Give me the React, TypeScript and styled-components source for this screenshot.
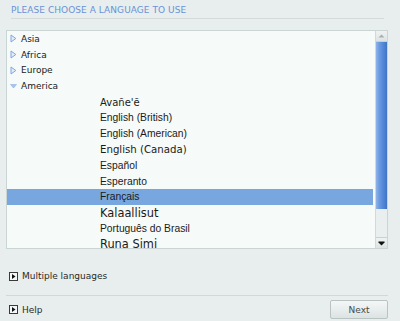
import styled, { createGlobalStyle } from "styled-components";

const Global = createGlobalStyle`
    html, body {
        margin: 0;
        padding: 0;
        background: #e7eeed;
    }
    body {
        font-family: "DejaVu Sans", sans-serif;
    }
`

const Page = styled.div`
    width: 400px;
    height: 321px;
    display: flex;
    flex-direction: column;
    background: #e7eeed;
    overflow: hidden;
`

const Title = styled.div`
    margin: 0 16px 0 11px;
    height: 19px;
    padding-top: 2px;
    box-sizing: border-box;
    border-bottom: 1px solid #d2dbda;
    color: #6a91d8;
    font-size: 9px;
    line-height: 17px;
    letter-spacing: 0.05px;
`

const ListBox = styled.div`
    margin: 11px 0 0 6px;
    width: 382px;
    height: 219px;
    box-sizing: border-box;
    border: 1px solid #cad4d3;
    background: #f6faf8;
    display: flex;
`

const Rows = styled.div`
    flex: 1;
    overflow: hidden;
    padding-right: 2px;
`

const Row = styled.div<{ $selected?: boolean }>`
    height: 15.8px;
    display: flex;
    align-items: center;
    background: ${p => (p.$selected ? "#78a7df" : "transparent")};
    color: #1a1a1a;
    white-space: nowrap;
`

const Group = styled.span`
    font-family: "DejaVu Sans", sans-serif;
    font-size: 9px;
    padding-left: 3px;
    display: flex;
    align-items: center;
    gap: 4px;
`

const Lang = styled.span<{ $font?: string; $size?: number }>`
    padding-left: 93px;
    font-family: ${p => p.$font || "'Liberation Sans', sans-serif"};
    font-size: ${p => p.$size || 10.3}px;
`

const Scrollbar = styled.div`
    width: 11px;
    display: flex;
    flex-direction: column;
    border-left: 1px solid #d2dad9;
    background: #e8eeed;
`

const ScrollButton = styled.div`
    height: 10px;
    display: flex;
    align-items: center;
    justify-content: center;
    background: linear-gradient(#eef2f2, #dde3e3);
    border-bottom: 1px solid #c9d1d0;
    &:last-child {
        border-bottom: none;
        border-top: 1px solid #c9d1d0;
    }
`

const Thumb = styled.div`
    height: 167px;
    background: linear-gradient(90deg, #8fb3e8 0%, #6a9ae0 30%, #4f85d6 70%, #3f74c4 100%);
`

const Track = styled.div`
    flex: 1;
    background: #e9efee;
`

const Expander = styled.div`
    margin: 20px 0 0 9px;
    height: 14px;
    display: flex;
    align-items: center;
    gap: 4px;
    font-size: 9px;
    color: #2a2a2a;
`

const Footer = styled.div`
    margin: 12px 12px 0 6px;
    border-top: 1px solid #d0d9d8;
    padding: 4px 0 0 3px;
    display: flex;
    align-items: center;
    justify-content: space-between;
`

const HelpLink = styled.div`
    display: flex;
    align-items: center;
    gap: 4px;
    font-size: 9px;
    color: #2a2a2a;
`

const NextButton = styled.button`
    width: 58px;
    height: 19px;
    padding: 0;
    border: 1px solid #b9c3c2;
    border-radius: 2px;
    background: linear-gradient(#f4f7f7, #dce3e3);
    font-family: "DejaVu Sans", sans-serif;
    font-size: 9px;
    color: #4a4a4a;
`

function Triangle({ open }: { open?: boolean }) {
    if (open) {
        return (
            <svg width="7" height="7" viewBox="0 0 7 7">
                <path d="M0.5 1.5 L6.5 1.5 L3.5 5 Z" fill="#a8c3ea" stroke="#8fb1e4" strokeWidth="0.6" />
            </svg>
        )
    }
    return (
        <svg width="7" height="9" viewBox="0 0 7 9">
            <path d="M1 1 L5.8 4.5 L1 8 Z" fill="#e3edfa" stroke="#7fa6e2" strokeWidth="1" />
        </svg>
    )
}

function BoxArrow() {
    return (
        <svg width="9" height="9" viewBox="0 0 9 9">
            <rect x="0.5" y="0.5" width="8" height="8" fill="#f4f7f7" stroke="#3a3a3a" strokeWidth="1" />
            <path d="M3 2 L6.5 4.5 L3 7 Z" fill="#111" />
        </svg>
    )
}

const groups = [
    { name: "Asia" },
    { name: "Africa" },
    { name: "Europe" },
    { name: "America", open: true },
]

const dejavu = "'DejaVu Sans', sans-serif"

const languages: { name: string; font?: string; size?: number; selected?: boolean }[] = [
    { name: "Avañe'ẽ", font: dejavu, size: 10 },
    { name: "English (British)" },
    { name: "English (American)" },
    { name: "English (Canada)", font: dejavu, size: 10.2 },
    { name: "Español" },
    { name: "Esperanto" },
    { name: "Français", selected: true },
    { name: "Kalaallisut", font: dejavu, size: 11.4 },
    { name: "Português do Brasil" },
    { name: "Runa Simi", font: dejavu, size: 11.4 },
]

export default function App() {
    return (
        <Page>
            <Global />
            <Title>PLEASE CHOOSE A LANGUAGE TO USE</Title>
            <ListBox>
                <Rows>
                    {groups.map(g => (
                        <Row key={g.name}>
                            <Group><Triangle open={g.open} />{g.name}</Group>
                        </Row>
                    ))}
                    {languages.map(l => (
                        <Row key={l.name} $selected={l.selected}>
                            <Lang $font={l.font} $size={l.size}>{l.name}</Lang>
                        </Row>
                    ))}
                </Rows>
                <Scrollbar>
                    <ScrollButton>
                        <svg width="7" height="5" viewBox="0 0 7 5">
                            <path d="M3.5 0.5 L6.5 3.5 L0.5 3.5 Z" fill="#a7b0b0" />
                        </svg>
                    </ScrollButton>
                    <Thumb />
                    <Track />
                    <ScrollButton>
                        <svg width="7" height="5" viewBox="0 0 7 5">
                            <path d="M0.5 0.5 L6.5 0.5 L6.5 1.5 L3.5 4.5 L0.5 1.5 Z" fill="#111" />
                        </svg>
                    </ScrollButton>
                </Scrollbar>
            </ListBox>
            <Expander><BoxArrow />Multiple languages</Expander>
            <Footer>
                <HelpLink><BoxArrow />Help</HelpLink>
                <NextButton>Next</NextButton>
            </Footer>
        </Page>
    )
}
